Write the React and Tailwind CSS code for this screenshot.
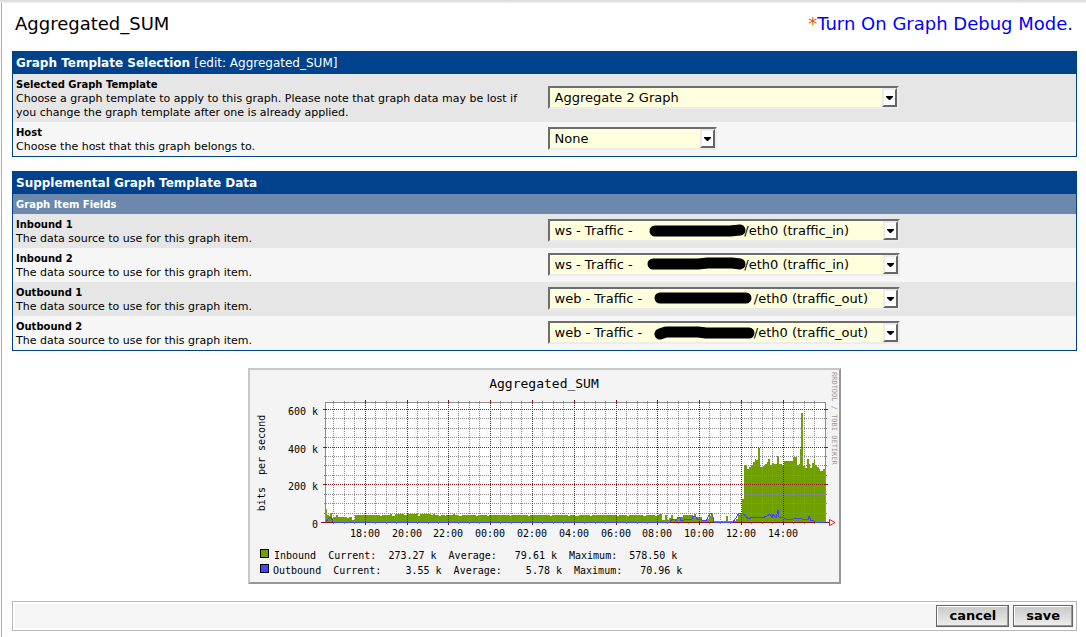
import React from 'react';

const MAJOR_X = [117, 159, 200, 242, 284, 326, 368, 409, 451, 493, 535];
const MINOR_X = [
  85, 96, 106,
  ...MAJOR_X.flatMap((x) => [x + 10, x + 21, x + 31]).filter((x) => x < 577),
];
const MAJOR_Y = [41, 79, 116];
const MINOR_Y = [50, 60, 69, 88, 97, 107, 126, 135, 145];
const HOURS = ['18:00', '20:00', '22:00', '00:00', '02:00', '04:00', '06:00', '08:00', '10:00', '12:00', '14:00'];

// [start x, height] steps of the inbound traffic area
const INBOUND = [
  [78, 13], [79, 7], [81, 6], [82, 8], [83, 9], [84, 4], [86, 5], [88, 7], [90, 5], [96, 4], [97, 5],
  [99, 4], [101, 5], [104, 2], [107, 7], [119, 7], [121, 7], [132, 6], [134, 7], [138, 6], [139, 7],
  [142, 8], [144, 6], [147, 8], [156, 7], [159, 8], [170, 6], [172, 8], [183, 7], [185, 8], [187, 7],
  [191, 6], [193, 7], [197, 6], [198, 7], [205, 8], [207, 7], [211, 6], [214, 7], [228, 6], [230, 7],
  [239, 6], [241, 7], [262, 6], [264, 7], [280, 6], [282, 7], [302, 6], [304, 7], [320, 6], [322, 7],
  [327, 6], [331, 7], [342, 6], [344, 7], [369, 6], [371, 7], [379, 6], [381, 7], [395, 6], [398, 7],
  [407, 6], [409, 7], [411, 8], [414, 2], [417, 7], [419, 2], [421, 4], [423, 7], [425, 3], [429, 5],
  [432, 5], [435, 7], [441, 7], [445, 6], [446, 8], [448, 5], [452, 5], [454, 2], [458, 3], [461, 6],
  [463, 9], [465, 5], [466, 1], [478, 6], [480, 1], [488, 3], [490, 7], [492, 9], [494, 23], [496, 57],
  [498, 56], [499, 53], [501, 55], [503, 57], [505, 60], [507, 63], [508, 62], [510, 74], [512, 55],
  [515, 56], [517, 58], [519, 60], [520, 63], [522, 57], [524, 59], [526, 58], [529, 66], [531, 58],
  [534, 56], [536, 61], [545, 65], [549, 57], [551, 58], [552, 73], [553, 109], [555, 56], [557, 54],
  [559, 63], [561, 58], [562, 54], [564, 59], [566, 62], [567, 57], [569, 55], [571, 53], [572, 51], [575, 53],
];

const OUTBOUND =
  '78,154 81,150 83,149 85,154 422,154 424,151 426,151 428,153 430,149 432,149 433,153 440,151 444,151 445,148 448,149 450,152 452,151 454,152 458,153 460,149 463,145 465,149 466,154 485,154 488,150 491,145 494,145 498,148 500,151 505,149 514,150 519,148 522,146 524,150 525,146 528,150 530,142 531,149 534,149 538,151 545,151 550,150 554,151 560,152 561,148 563,153 565,152 567,154 577,154';

const areaPath = () => {
  let d = 'M78 154';
  INBOUND.forEach(([x, h]) => {
    d += `H${x}V${154 - h}`;
  });
  return `${d}H578V154Z`;
};

const TrafficGraph = () => (
  <svg
    width="593"
    height="216"
    viewBox="0 0 593 216"
    role="img"
    aria-label="Aggregated_SUM"
    className="mx-auto mt-[17px] block font-['DejaVu_Sans_Mono',monospace] text-[10px]"
  >
    <rect width="593" height="216" fill="#f4f4f4" />
    <path d="M0 0H593L591 2H2V214L0 216Z" fill="#c8c8c8" />
    <path d="M593 0V216H0L2 214H591V2Z" fill="#969696" />
    <rect x="78" y="35" width="500" height="120" fill="#fff" />
    <path d={areaPath()} fill="#6fa000" shapeRendering="crispEdges" />
    <g shapeRendering="crispEdges" fill="none">
      <path d="M77.5 154V34.5H577.5V154" stroke="#8c8c8c" />
      <g stroke="#8c8c8c" strokeDasharray="1 1">
        {MINOR_X.map((x) => (
          <path key={x} d={`M${x + 0.5} 33V157`} />
        ))}
        {MINOR_Y.map((y) => (
          <path key={y} d={`M76 ${y + 0.5}H580`} />
        ))}
      </g>
      <g stroke="#8a1519" strokeDasharray="1 1">
        {MAJOR_X.map((x) => (
          <path key={x} d={`M${x + 0.5} 33V157`} />
        ))}
        {MAJOR_Y.map((y) => (
          <path key={y} d={`M76 ${y + 0.5}H580`} />
        ))}
      </g>
      <g stroke="#8a1519">
        {MAJOR_X.map((x) => (
          <path key={x} d={`M${x + 0.5} 32V36M${x + 0.5} 153V157`} />
        ))}
        {MAJOR_Y.map((y) => (
          <path key={y} d={`M75 ${y + 0.5}H79M576 ${y + 0.5}H580`} />
        ))}
        <path d="M73 154.5H582" />
      </g>
      <polyline points={OUTBOUND} stroke="#4444ff" />
    </g>
    <path d="M581.5 151.5V157.5L587 154.5Z" fill="#fff" stroke="#f01010" />

    <text x="296" y="20" textAnchor="middle" className="text-[13px]">Aggregated_SUM</text>
    <g textAnchor="end">
      <text x="70" y="47">600 k</text>
      <text x="70" y="85">400 k</text>
      <text x="70" y="122">200 k</text>
      <text x="70" y="160">0</text>
    </g>
    <g textAnchor="middle">
      {HOURS.map((hour, i) => (
        <text key={hour} x={MAJOR_X[i]} y="169">{hour}</text>
      ))}
      <text transform="translate(17 95) rotate(-90)" className="whitespace-pre">{'bits  per second'}</text>
    </g>
    <text transform="translate(584 4) rotate(90)" fill="#999" className="text-[7px]">
      RRDTOOL / TOBI OETIKER
    </text>

    <rect x="12.5" y="181.5" width="8" height="8" fill="#6fa000" stroke="#000" />
    <text x="26" y="191" className="whitespace-pre">
      {'Inbound  Current:  273.27 k  Average:   79.61 k  Maximum:  578.50 k'}
    </text>
    <rect x="12.5" y="196.5" width="8" height="8" fill="#4444ff" stroke="#000" />
    <text x="25" y="206" className="whitespace-pre">
      {'Outbound  Current:    3.55 k  Average:    5.78 k  Maximum:   70.96 k'}
    </text>
  </svg>
);

const Select = ({ id, value, width, children }) => (
  <div className={`relative ${width}`}>
    <select
      id={id}
      className="block h-[23px] w-full appearance-none border-2 border-t-[#6d6d6d] border-r-[#ececec] border-b-[#ececec] border-l-[#6d6d6d] bg-[#ffffdd] pt-px pl-[5px] text-[13px] leading-[18px]"
    >
      <option>{value}</option>
    </select>
    {children}
    <span className="pointer-events-none absolute top-[2px] right-[2px] flex h-[19px] w-[15px] items-center justify-center border-2 border-t-[#ececec] border-r-[#666] border-b-[#666] border-l-[#ececec] bg-white">
      <svg width="7" height="4" viewBox="0 0 7 4">
        <path d="M0 0H7V1L4 4H3L0 1Z" />
      </svg>
    </span>
  </div>
);

const Field = ({ id, label, description, shaded, children }) => (
  <div className={`grid grid-cols-2 items-center ${shaded ? 'bg-[#e6e6e6]' : 'bg-[#f6f6f6]'}`}>
    <div className="pt-1 pr-3 pb-[2px] pl-[3px] leading-[14px]">
      <label htmlFor={id} className="block text-[10px] leading-[14px] font-bold">{label}</label>
      <p className="text-[11px] leading-[14px]">{description}</p>
    </div>
    <div className="px-[3px] pb-px">{children}</div>
  </div>
);

const GRAPH_ITEMS = [
  { id: 'inbound1', label: 'Inbound 1', before: 'ws - Traffic -', after: '/eth0 (traffic_in)', mark: 'M107 12H182L192 11' },
  { id: 'inbound2', label: 'Inbound 2', before: 'ws - Traffic -', after: '/eth0 (traffic_in)', mark: 'M105 11H150L160 10H184L192 11' },
  { id: 'outbound1', label: 'Outbound 1', before: 'web - Traffic -', after: '/eth0 (traffic_out)', mark: 'M112 11H198' },
  { id: 'outbound2', label: 'Outbound 2', before: 'web - Traffic -', after: '/eth0 (traffic_out)', mark: 'M112 13L118 11H150L158 12H201' },
];

const App = () => {
  return (
    <div className="min-h-screen bg-white font-['DejaVu_Sans',sans-serif] text-black">
      <div className="h-[3px] bg-gradient-to-b from-[#d8d8d8] to-[#efefef]" />
      <main className="ml-px min-h-[calc(100vh-3px)] border-l border-[#aaaaaa] pr-[9px] pb-[6px] pl-[10px]">
        <header className="flex h-12 items-center justify-between pr-1 pb-2 pl-[3px] text-[18px]">
          <h1>Aggregated_SUM</h1>
          <p className="flex items-center">
            <span className="text-[#cc6611]">*</span>
            <a href="#debug" className="text-[#0000ff]">Turn On Graph Debug Mode.</a>
          </p>
        </header>

        <form>
          <section className="border border-t-0 border-[#00438c]">
            <h2 className="bg-[#00438c] px-[3px] pt-1 pb-[2px] text-[12px] leading-[17px] font-bold text-white">
              Graph Template Selection <span className="font-normal">[edit: Aggregated_SUM]</span>
            </h2>
            <Field
              id="template"
              label="Selected Graph Template"
              description="Choose a graph template to apply to this graph. Please note that graph data may be lost if you change the graph template after one is already applied."
              shaded
            >
              <Select id="template" value="Aggregate 2 Graph" width="w-[351px]" />
            </Field>
            <Field id="host" label="Host" description="Choose the host that this graph belongs to.">
              <Select id="host" value="None" width="w-[169px]" />
            </Field>
          </section>

          <section className="mt-[14px] border border-t-0 border-[#00438c]">
            <h2 className="bg-[#00438c] px-[3px] pt-1 pb-[2px] text-[12px] leading-[17px] font-bold text-white">
              Supplemental Graph Template Data
            </h2>
            <h3 className="bg-[#6d88ad] px-[3px] pt-1 pb-[2px] text-[10px] leading-[14px] font-bold text-white">
              Graph Item Fields
            </h3>
            {GRAPH_ITEMS.map(({ id, label, before, after, mark }, index) => (
              <Field
                key={id}
                id={id}
                label={label}
                description="The data source to use for this graph item."
                shaded={index % 2 === 0}
              >
                <Select id={id} value={before + '\u00a0'.repeat(27) + after} width="w-[352px]">
                  <svg width="352" height="23" viewBox="0 0 352 23" className="pointer-events-none absolute top-0 left-0">
                    <path d={mark} fill="none" stroke="#000" strokeWidth="11" strokeLinecap="round" strokeLinejoin="round" />
                  </svg>
                </Select>
              </Field>
            ))}
          </section>

          <TrafficGraph />

          <footer className="mt-[17px] flex justify-end gap-1 border border-[#b8b8b8] bg-[#f5f5f5] p-[3px] shadow-[inset_0_0_0_2px_#fff]">
            <button type="button" className="h-[22px] border border-[#666] bg-gradient-to-b from-[#c8c8c8] to-[#eeeeee] px-3 text-[13px] leading-[18px] font-bold shadow-[inset_-1px_-1px_0_#999,inset_1px_1px_0_#fff]">
              cancel
            </button>
            <button type="submit" className="h-[22px] border border-[#666] bg-gradient-to-b from-[#c8c8c8] to-[#eeeeee] px-3 text-[13px] leading-[18px] font-bold shadow-[inset_-1px_-1px_0_#999,inset_1px_1px_0_#fff]">
              save
            </button>
          </footer>
        </form>
      </main>
    </div>
  );
};

export default App;
